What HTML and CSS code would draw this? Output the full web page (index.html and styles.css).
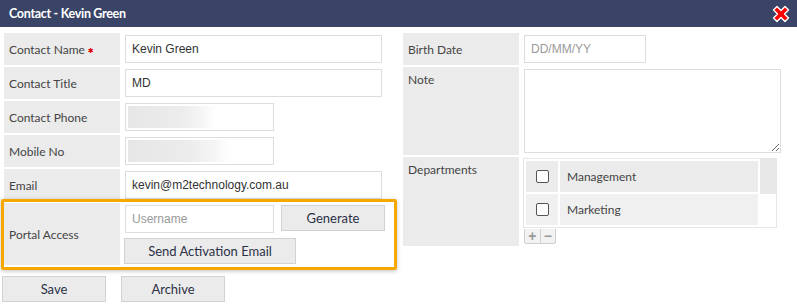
FILE: index.html
```html
<!DOCTYPE html>
<html lang="en">

<head>
  <meta charset="UTF-8" />
  <title>Contact - Kevin Green</title>
  <link rel="stylesheet" href="styles.css">
</head>

<body>
  <header class="titlebar">
    <h1>Contact - Kevin Green</h1>
    <button class="close" title="Close">
      <svg width="18" height="18" viewBox="0 0 18 18">
        <path d="M1.5 5 L5 1.5 L9 5.5 L13 1.5 L16.5 5 L12.5 9 L16.5 13 L13 16.5 L9 12.5 L5 16.5 L1.5 13 L5.5 9 Z"
          fill="#ff0000" stroke="#ffffff" stroke-width="1.4" stroke-linejoin="round" />
      </svg>
    </button>
  </header>

  <div class="form">
    <!-- Left column -->
    <div class="col">
      <div class="row">
        <label class="label">Contact Name<span class="req">&#10033;</span></label>
        <div class="field"><input type="text" class="input" value="Kevin Green" /></div>
      </div>
      <div class="row">
        <label class="label">Contact Title</label>
        <div class="field"><input type="text" class="input" value="MD" /></div>
      </div>
      <div class="row">
        <label class="label">Contact Phone</label>
        <div class="field">
          <div class="input input-short blurred"><span class="blur-bar" style="width: 88px"></span></div>
        </div>
      </div>
      <div class="row">
        <label class="label">Mobile No</label>
        <div class="field">
          <div class="input input-short blurred"><span class="blur-bar" style="width: 103px"></span></div>
        </div>
      </div>
      <div class="row">
        <label class="label">Email</label>
        <div class="field"><input type="text" class="input" value="kevin@m2technology.com.au" /></div>
      </div>
      <div class="row row-portal">
        <label class="label">Portal Access</label>
        <div class="field portal">
          <div class="portal-line">
            <input type="text" class="input input-short" placeholder="Username" />
            <button class="btn">Generate</button>
          </div>
          <button class="btn btn-wide">Send Activation Email</button>
        </div>
      </div>
    </div>

    <!-- Right column -->
    <div class="col">
      <div class="row">
        <label class="label">Birth Date</label>
        <div class="field"><input type="text" class="input input-date" placeholder="DD/MM/YY" /></div>
      </div>
      <div class="row row-note">
        <label class="label label-top">Note</label>
        <div class="field"><textarea class="input note"></textarea></div>
      </div>
      <div class="row row-depts">
        <label class="label label-top">Departments</label>
        <div class="field depts">
          <div class="dept-frame">
            <div class="dept-list">
              <div class="dept">
                <span class="dept-check"><span class="box"></span></span>
                <span class="dept-name">Management</span>
              </div>
              <div class="dept alt">
                <span class="dept-check"><span class="box"></span></span>
                <span class="dept-name">Marketing</span>
              </div>
            </div>
            <div class="scroll-stub"></div>
          </div>
          <div class="pm">
            <span>+</span>
            <span>&minus;</span>
          </div>
        </div>
      </div>
    </div>
  </div>

  <div class="actions">
    <button class="btn">Save</button>
    <button class="btn">Archive</button>
  </div>
</body>

</html>
```

FILE: styles.css
```css
* {
  box-sizing: border-box;
  margin: 0;
  padding: 0;
}

body {
  font-family: 'Lato', 'Liberation Sans', sans-serif;
  background: #ffffff;
  color: #444;
  width: 797px;
  height: 305px;
  overflow: hidden;
}

.titlebar {
  height: 27px;
  background: #3a4467;
  display: flex;
  align-items: center;
  justify-content: space-between;
  padding: 0 7px 0 9px;
}

.titlebar h1 {
  font-size: 12.5px;
  font-weight: 700;
  color: #ffffff;
  letter-spacing: -0.3px;
}

.close {
  border: none;
  background: none;
  width: 18px;
  height: 18px;
  display: flex;
  cursor: pointer;
}

.form {
  display: flex;
  gap: 21px;
  padding: 6px 0 0 4px;
}

.col {
  width: 378px;
  display: flex;
  flex-direction: column;
  gap: 2px;
}

.row {
  display: grid;
  grid-template-columns: 116px 1fr;
  column-gap: 5px;
  min-height: 32px;
}

.label {
  background: #ebebeb;
  font-size: 12px;
  color: #444;
  display: flex;
  align-items: center;
  padding: 0 5px;
}

.label-top {
  align-items: flex-start;
  padding-top: 6px;
  line-height: 14px;
}

.req {
  font-family: 'DejaVu Sans', sans-serif;
  color: #e00000;
  font-size: 7px;
  margin-left: 3px;
  margin-top: 4px;
}

.field {
  display: flex;
  align-items: center;
}

.input {
  width: 257px;
  height: 28px;
  border: 1px solid #dddddd;
  padding: 0 6px;
  font-family: 'Liberation Sans', Arial, sans-serif;
  font-size: 12px;
  color: #333;
  background: #ffffff;
  outline: none;
}

.input::placeholder {
  color: #999;
}

.input-short {
  width: 149px;
}

.input-date {
  width: 122px;
}

.blurred {
  display: flex;
  align-items: center;
  padding: 0 2px;
}

.blur-bar {
  height: 22px;
  background: linear-gradient(90deg, #e6e6e6, #ececec 60%, #f6f6f6 85%, #ffffff);
  filter: blur(0.6px);
}

.row-portal {
  position: relative;
  min-height: 62px;
}

/* highlight frame drawn over the portal row */
.row-portal::after {
  content: '';
  position: absolute;
  top: -4px;
  left: -3px;
  right: -15px;
  bottom: -5px;
  border: 3px solid #f5a800;
  border-radius: 2px;
  box-shadow: 0 1px 4px rgba(0, 0, 0, 0.25);
  pointer-events: none;
}

.portal {
  flex-direction: column;
  align-items: flex-start;
  justify-content: flex-start;
  padding-top: 2px;
  gap: 5px;
}

.portal-line {
  display: flex;
  align-items: flex-start;
  gap: 7px;
}

.btn {
  font-family: 'Lato', sans-serif;
  font-size: 13px;
  color: #2b3147;
  background: #ebebeb;
  border: 1px solid #d2d2d2;
  width: 104px;
  height: 26px;
  cursor: pointer;
}

.btn-wide {
  width: 172px;
  margin-left: -1px;
}

.row-note {
  min-height: 88px;
}

.note {
  height: 84px;
  resize: both;
  padding: 6px;
}

.row-depts {
  min-height: 89px;
}

.depts {
  flex-direction: column;
  align-items: flex-start;
  justify-content: flex-start;
  padding-top: 1px;
}

.dept-frame {
  width: 254px;
  height: 70px;
  margin-left: -1px;
  border: 1px solid #e6e6e6;
  display: flex;
  justify-content: space-between;
}

.dept-list {
  display: flex;
  flex-direction: column;
  gap: 2px;
  padding: 2px;
}

.dept {
  display: flex;
  gap: 2px;
  height: 31px;
}

.dept-check {
  width: 32px;
  background: #ebebeb;
  display: flex;
  align-items: center;
  justify-content: center;
}

.dept-name {
  width: 198px;
  background: #ebebeb;
  font-size: 12px;
  color: #444;
  display: flex;
  align-items: center;
  padding-left: 7px;
}

.alt .dept-check,
.alt .dept-name {
  background: #f0f0f0;
}

.box {
  width: 13px;
  height: 13px;
  border: 1px solid #555;
  border-radius: 2px;
  background: #ffffff;
}

.scroll-stub {
  width: 16px;
  height: 35px;
  background: #e8e8e8;
}

.pm {
  display: flex;
  width: 32px;
  height: 15px;
  margin-top: 1px;
  border: 1px solid #cfcfcf;
  border-top: none;
  border-radius: 0 0 3px 3px;
  background: #f2f2f2;
}

.pm span {
  flex: 1;
  display: flex;
  align-items: center;
  justify-content: center;
  font-family: 'Liberation Sans', sans-serif;
  font-size: 14px;
  font-weight: 700;
  color: #999;
  line-height: 1;
}

.pm span + span {
  border-left: 1px solid #cfcfcf;
}

.actions {
  display: flex;
  gap: 15px;
  padding: 11px 0 0 2px;
}
```
